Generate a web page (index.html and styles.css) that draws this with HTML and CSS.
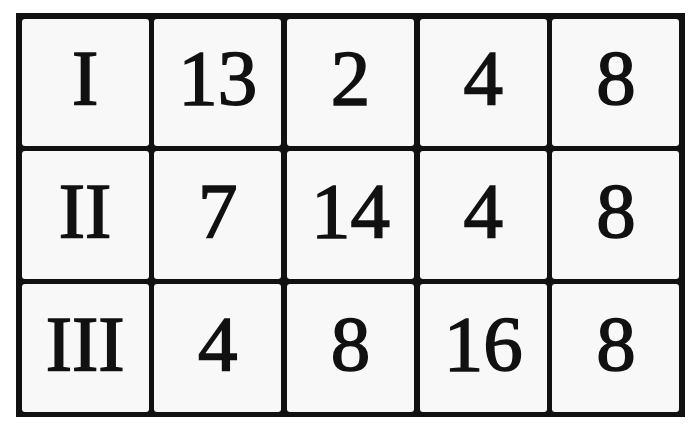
FILE: index.html
```html
<!DOCTYPE html>
<html lang="en">
<head>
<meta charset="utf-8">
<title>Table</title>
<link rel="stylesheet" href="styles.css">
</head>
<body>
<div class="page">
  <div class="grid">
    <div class="cell">I</div>
    <div class="cell">13</div>
    <div class="cell">2</div>
    <div class="cell">4</div>
    <div class="cell">8</div>
    <div class="cell">II</div>
    <div class="cell">7</div>
    <div class="cell">14</div>
    <div class="cell">4</div>
    <div class="cell">8</div>
    <div class="cell">III</div>
    <div class="cell">4</div>
    <div class="cell">8</div>
    <div class="cell">16</div>
    <div class="cell">8</div>
  </div>
</div>
</body>
</html>
```
FILE: styles.css
```css
html, body {
  margin: 0;
  padding: 0;
  background: #ffffff;
}
.page {
  width: 700px;
  height: 428px;
  padding: 13px 0 0 16px;
  box-sizing: border-box;
}
.grid {
  width: 669px;
  height: 404px;
  box-sizing: border-box;
  background: #111111;
  padding: 5.5px;
  display: grid;
  grid-template-columns: repeat(5, 1fr);
  grid-template-rows: repeat(3, 1fr);
  gap: 5.5px;
}
.cell {
  background: #f8f8f8;
  border-radius: 3px;
  display: flex;
  align-items: center;
  justify-content: center;
  padding-bottom: 8px;
  box-sizing: border-box;
  font-family: "Liberation Serif", "Times New Roman", serif;
  font-size: 79px;
  color: #111111;
  -webkit-text-stroke: 1.6px #111111;
}
```
